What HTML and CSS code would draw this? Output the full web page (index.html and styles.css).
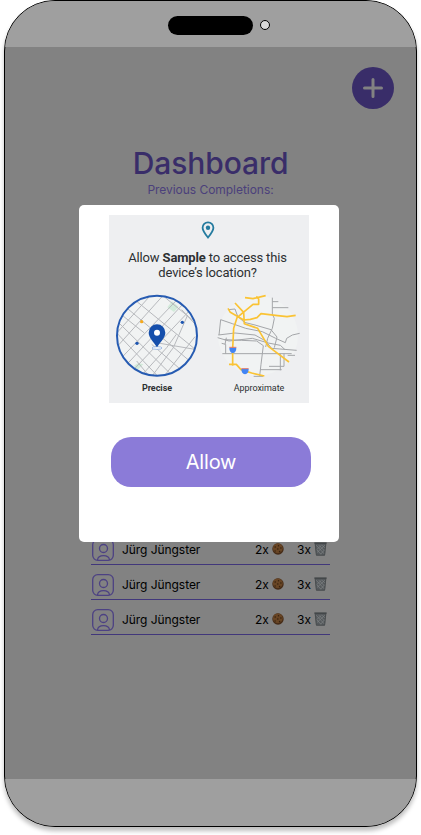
FILE: index.html
```html
<!DOCTYPE html>
<html lang="en">
<head>
<meta charset="utf-8">
<title>Dashboard</title>
<link rel="stylesheet" href="styles.css">
</head>
<body>
<svg class="defs" aria-hidden="true">
  <symbol id="user" viewBox="0 0 24 24">
    <g fill="none" stroke="currentColor" stroke-width="1.300"><rect x="1.700" y="1.700" width="20.600" height="20.600" rx="5"/><circle cx="12.500" cy="10.500" r="4"/><path d="M6.500 22c.3-2.800 2.700-4.300 6-4.300s5.700 1.500 6 4.300"/></g>
  </symbol>
  <symbol id="cookie" viewBox="0 0 12 12">
    <circle cx="6" cy="6" r="5.700" fill="#452b17"/><circle cx="5.800" cy="5.300" r="4.900" fill="#684525"/>
    <g fill="#36210f"><circle cx="3.200" cy="4" r=".8"/><circle cx="6.500" cy="2.700" r=".7"/><circle cx="8.900" cy="5" r=".8"/><circle cx="5.800" cy="6" r=".8"/><circle cx="3.100" cy="8" r=".7"/><circle cx="7.600" cy="8.600" r=".8"/></g>
  </symbol>
  <symbol id="bin" viewBox="0 0 12 13">
    <path d="M.6 1h10.800L10 12.500H2z" fill="#55595c"/>
    <path d="M2 3l7.500 8M4.500 3l5 5M7.500 3L10 5.500M2.500 7l4 4.500M10 3l-7.500 7M7 3L2.500 7M10 7l-4 4.500" stroke="#7d8183" stroke-width=".7"/>
    <path d="M.3 1h11.400" stroke="#3d4143" stroke-width="1.200"/><path d="M2 12.300h8M1.100 2l1 10M10.900 2l-1 10" stroke="#44484a" stroke-width=".7"/>
  </symbol>
</svg>
<div class="phone">
  <header class="statusbar"><span class="island"></span><span class="camera"></span></header>
  <main class="screen">
    <button class="add" aria-label="Add"><svg viewBox="0 0 42 42"><path d="M21 12.500v17M12.500 21h17"/></svg></button>
    <h1>Dashboard</h1>
    <p class="subtitle">Previous Completions:</p>
    <ul class="list">
      <li><svg class="user"><use href="#user"/></svg><span class="name">Jürg Jüngster</span><span class="cookies">2x</span><svg class="cookie"><use href="#cookie"/></svg><span class="bins">3x</span><svg class="bin"><use href="#bin"/></svg></li>
      <li><svg class="user"><use href="#user"/></svg><span class="name">Jürg Jüngster</span><span class="cookies">2x</span><svg class="cookie"><use href="#cookie"/></svg><span class="bins">3x</span><svg class="bin"><use href="#bin"/></svg></li>
      <li><svg class="user"><use href="#user"/></svg><span class="name">Jürg Jüngster</span><span class="cookies">2x</span><svg class="cookie"><use href="#cookie"/></svg><span class="bins">3x</span><svg class="bin"><use href="#bin"/></svg></li>
    </ul>
  </main>
  <footer class="bottombar"></footer>
</div>
<div class="modal">
  <section class="permission">
    <svg class="pin" viewBox="0 0 14 18"><path d="M7 16.500C4 12.800 1.600 10 1.600 6.800a5.400 5.400 0 0 1 10.800 0C12.400 10 10 12.800 7 16.500z" fill="none" stroke="#247b9f" stroke-width="1.800"/><circle cx="7" cy="6.700" r="2.200" fill="#247b9f"/></svg>
    <p class="question">Allow <b>Sample</b> to access this<br>device’s location?</p>
    <div class="maps">
      <figure>
        <svg viewBox="12 15 300 270">
          <defs><clipPath id="disc"><circle cx="156" cy="152" r="120"/></clipPath></defs>
          <circle cx="156" cy="152" r="120" fill="#f1f3f3"/>
          <g clip-path="url(#disc)">
            <path d="M201 49l20 16-14 16-20-14zM87 242l13-8 15 4-18 18z" fill="#d2ebda"/>
            <g fill="none" stroke="#b7b9bd" stroke-width="3">
              <path d="M28 152L142 25M30 192L180 25M46 222L224 36M62 242L236 55M82 258L262 68M113 268L185 188L214 148M142 272L205 188L248 90M180 270L270 155M90 45L272 194M62 66L280 250M48 88L118 144M140 178L240 265M40 112L202 272M36 145L155 270M165 25L276 116M160 174L205 182L275 194M95 228L128 268M230 74L278 126"/>
            </g>
          </g>
          <circle cx="156" cy="152" r="120" fill="none" stroke="#265bb2" stroke-width="6"/>
          <circle cx="110" cy="110" r="5" fill="#f5a91c"/><circle cx="232" cy="112" r="5" fill="#1c55b0"/><circle cx="96" cy="175" r="5" fill="#1c55b0"/>
          <ellipse cx="156" cy="189" rx="15" ry="4" fill="#fff" stroke="#9bb9e4" stroke-width="3"/>
          <path d="M156 187C145 169 131 158 131 143a25 25 0 0 1 50 0C181 158 167 169 156 187z" fill="#154fac"/><circle cx="156" cy="143" r="9" fill="#fff"/>
        </svg>
        <figcaption class="precise">Precise</figcaption>
      </figure>
      <figure>
        <svg viewBox="12 15 300 270">
          <circle cx="159" cy="152" r="120" fill="#f1f3f3"/>
          <g fill="none" stroke="#a4a6a9" stroke-width="3" stroke-linejoin="round">
            <path d="M202 38V88L208 100L202 130L188 160L182 186M202 50h18M202 68h48M70 74l20-2 8 22 20 18 32 8 48 14 18 22-8 32M42 150L47 104L82 116L122 130L172 140L212 160L241 173L245 160L262 150L284 145M38 158L72 168L142 160L190 174L226 181L240 194M40 150L90 144L150 150L182 168L200 190L275 196M52 206H260M50 175L62 178V206M64 158L60 178M58 164L110 166L155 168L175 182L168 238L164 273M146 274h28M165 254h65M226 206v50M237 206v38h-45M248 211h22"/>
          </g>
          <g fill="none" stroke="#fac334" stroke-width="5" stroke-linejoin="round">
            <path d="M120 38l24 3 38-9M154 34l7 8v16h-17L96 98L86 130L83 190v52M90 54l26 28 2 34 40 14 32 54 62 47M69 70l7 12 40 23 20-2 20-5 12-12 50 6 28 3 26-4M72 238h22l14 16 32 10 38 9"/>
          </g>
          <g fill="#4285f4"><path d="M73 188h21q0 15-10.500 16Q73 203 73 188z"/><path d="M109 252h22q0 14-11 16-11-2-11-16z"/></g>
          <path d="M73 187h21M109 251h22" stroke="#dd776b" stroke-width="3"/>
        </svg>
        <figcaption>Approximate</figcaption>
      </figure>
    </div>
  </section>
  <button class="allow">Allow</button>
</div>
</body>
</html>
```

FILE: styles.css
```css
* { box-sizing: border-box; }
body { margin: 0; height: 835px; padding: 0 4px; overflow: hidden; background: #fff; font-family: Inter, sans-serif; position: relative; }
button { border: 0; padding: 0; font: inherit; }
.defs { position: absolute; width: 0; height: 0; }
.phone { width: 413px; height: 827px; border: 1px solid #000; border-radius: 51px; overflow: hidden; display: flex; flex-direction: column; background: #828282; box-shadow: 0 4px 4px rgba(0, 0, 0, .25); }
.statusbar { height: 46px; background: #9f9f9f; display: flex; gap: 7px; padding: 15px 0 0 163px; flex: none; }
.island { width: 85px; height: 19px; border-radius: 10px; background: #000; }
.camera { width: 10px; height: 10px; margin-top: 4px; border: 1px solid #000; border-radius: 50%; background: #d9d9d9; }
.screen { flex: 1; display: flex; flex-direction: column; padding-top: 20px; }
.bottombar { height: 47px; background: #9f9f9f; flex: none; }
.add { align-self: flex-end; width: 42px; height: 42px; margin-right: 22px; border-radius: 50%; background: #392d69; }
.add svg { display: block; width: 42px; height: 42px; fill: none; stroke: #828282; stroke-width: 3; stroke-linecap: round; }
h1 { margin: 35px 0 0; text-align: center; font-size: 30px; line-height: 38px; font-weight: 500; letter-spacing: -.08px; color: #392d69; }
.subtitle { margin: 0; text-align: center; font-size: 12px; line-height: 16px; letter-spacing: -.04px; color: #4b407b; }
.list { list-style: none; width: 239px; margin: 332px 0 0 86px; padding: 0; font-size: 12px; color: #000; }
.list li { height: 35px; border-bottom: 1px solid #41377b; display: flex; align-items: center; padding: 5px 0 0; }
.user { width: 24px; height: 24px; color: #4c4183; flex: none; }
.name { width: 133px; margin-left: 7px; letter-spacing: -.06px; }
.cookies { width: 17px; }
.cookie { width: 12px; height: 12px; margin-bottom: 2px; }
.bins { width: 17px; margin-left: 13px; }
.bin { width: 13px; height: 14px; margin-bottom: 2px; }
.modal { position: absolute; left: 79px; top: 205px; width: 260px; height: 337px; border-radius: 5px; background: #fff; display: flex; flex-direction: column; padding: 10px 28px 0 30px; }
.permission { width: 200px; height: 188px; background: #eeeff1; font-family: Roboto, sans-serif; color: #2d2f32; display: flex; flex-direction: column; align-items: center; padding-top: 6px; }
.pin { width: 14px; height: 18px; margin-right: 2px; }
.question { margin: 11px 0 0; padding-right: 3px; text-align: center; font-size: 13px; line-height: 15px; letter-spacing: -.16px; white-space: nowrap; }
.maps { display: flex; margin-top: 10px; }
.maps figure { margin: 0; width: 100px; }
.maps svg { display: block; width: 100px; height: 90px; }
figcaption { text-align: center; font-size: 9px; line-height: 10px; margin-top: 3px; letter-spacing: -.05px; }
.precise { font-weight: 700; padding-right: 4px; }
.allow { width: 200px; height: 50px; margin: 34px 0 0 2px; border-radius: 20px; background: #8b7bd8; color: #fff; font-size: 20px; letter-spacing: -.2px; }
```
